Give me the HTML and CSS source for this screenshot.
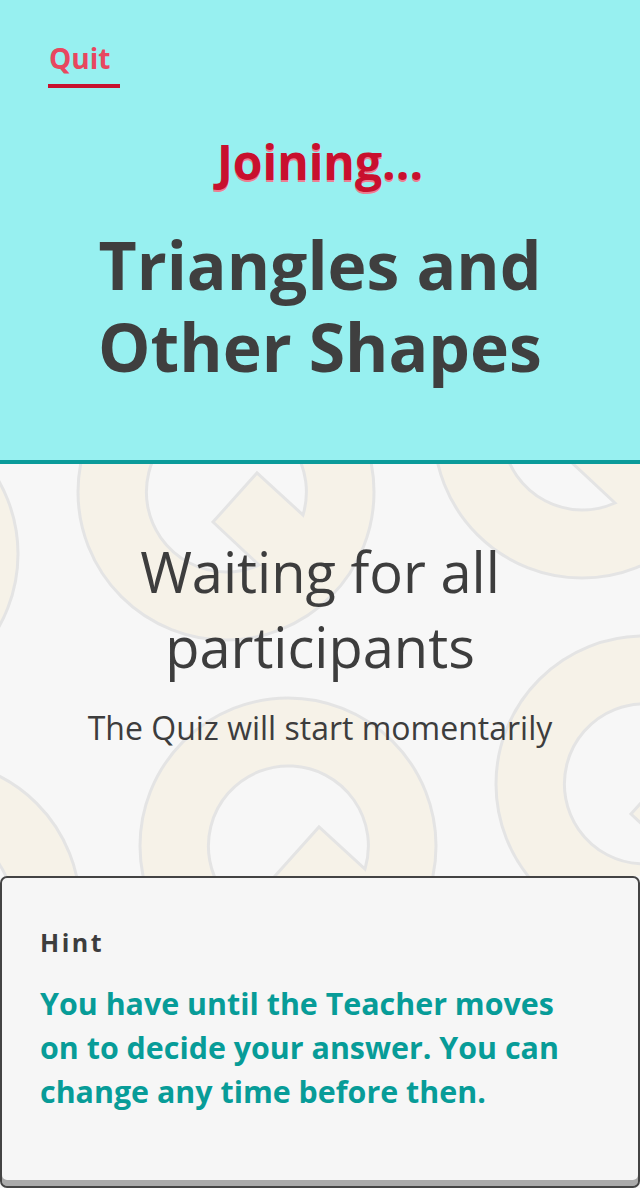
FILE: index.html
```html
<!DOCTYPE html>
<html lang="en">
<head>
<meta charset="utf-8">
<title>Joining quiz</title>
<link rel="stylesheet" href="styles.css">
</head>
<body>
<div class="page">
  <header class="header">
    <div class="topbar"><a class="quit" href="#">Quit</a></div>
    <p class="status">Joining...</p>
    <h1 class="title">Triangles and<br>Other Shapes</h1>
  </header>
  <main class="main">
    <svg class="pattern" viewBox="0 0 640 412" width="640" height="412" aria-hidden="true">
      <defs>
        <g id="q">
          <circle r="148" fill="#f6f2e8" stroke="#e4e4e4" stroke-width="3"/>
          <path d="M77,23 A80,80 0 1 0 33,73 L-13,30 L31,-19 Z" fill="#f7f7f7" stroke="#e4e4e4" stroke-width="3"/>
        </g>
      </defs>
      <use href="#q" x="226" y="28"/>
      <use href="#q" x="582" y="-34"/>
      <use href="#q" x="288" y="382"/>
      <use href="#q" x="644" y="320"/>
      <use href="#q" x="-130" y="90"/>
      <use href="#q" x="-68" y="444"/>
    </svg>
    <div class="waiting">
      <h2 class="waiting-title">Waiting for all<br>participants</h2>
      <p class="waiting-sub">The Quiz will start momentarily</p>
    </div>
  </main>
  <section class="hint">
    <h3 class="hint-label">Hint</h3>
    <p class="hint-text">You have until the Teacher moves<br>on to decide your answer. You can<br>change any time before then.</p>
  </section>
</div>
</body>
</html>
```
FILE: styles.css
```css
* { box-sizing: border-box; }
html, body { margin: 0; padding: 0; }
body {
  font-family: "Open Sans", "Noto Sans", sans-serif;
  color: #3f3f3f;
  background: #f7f7f7;
}
.page {
  width: 640px;
  height: 1188px;
  display: flex;
  flex-direction: column;
  overflow: hidden;
}
.header {
  height: 464px;
  flex: none;
  background: #97f0f0;
  border-bottom: 4px solid #0a9b9a;
  padding: 40px 0 0;
  text-align: center;
}
.topbar {
  text-align: left;
  padding-left: 48px;
  height: 48px;
}
.quit {
  display: inline-block;
  width: 72px;
  padding-left: 1px;
  font-size: 28px;
  line-height: 36px;
  font-weight: 700;
  color: #e8475f;
  text-decoration: none;
  padding-bottom: 8px;
  border-bottom: 4px solid #c8102e;
}
.status {
  margin: 46px 0 0;
  font-size: 48px;
  line-height: 56px;
  font-weight: 700;
  color: #c8102e;
  text-shadow: 0 2px 0 #ee7d92;
}
.title {
  margin: 33px 0 0;
  font-size: 66px;
  line-height: 82px;
  font-weight: 700;
  color: #3f3f3f;
}
.main {
  position: relative;
  flex: 1;
  background: #f7f7f7;
}
.pattern {
  position: absolute;
  left: 0;
  top: 0;
  display: block;
}
.waiting {
  position: relative;
  text-align: center;
  padding-top: 70px;
}
.waiting-title {
  margin: 0;
  font-size: 56px;
  line-height: 75px;
  font-weight: 400;
  color: #3d3d3d;
}
.waiting-sub {
  margin: 24px 0 0;
  font-size: 32px;
  line-height: 40px;
  color: #3d3d3d;
}
.hint {
  flex: none;
  height: 312px;
  background: #f6f6f6;
  border: 2px solid #444;
  border-radius: 7px;
  box-shadow: inset 0 -6px 0 #aaa;
  padding: 49px 38px 0;
}
.hint-label {
  margin: 0;
  font-size: 25px;
  line-height: 30px;
  font-weight: 700;
  letter-spacing: 2.5px;
  color: #3d3d3d;
}
.hint-text {
  margin: 25px 0 0;
  font-size: 30.4px;
  line-height: 44px;
  font-weight: 700;
  color: #079c98;
}
```
